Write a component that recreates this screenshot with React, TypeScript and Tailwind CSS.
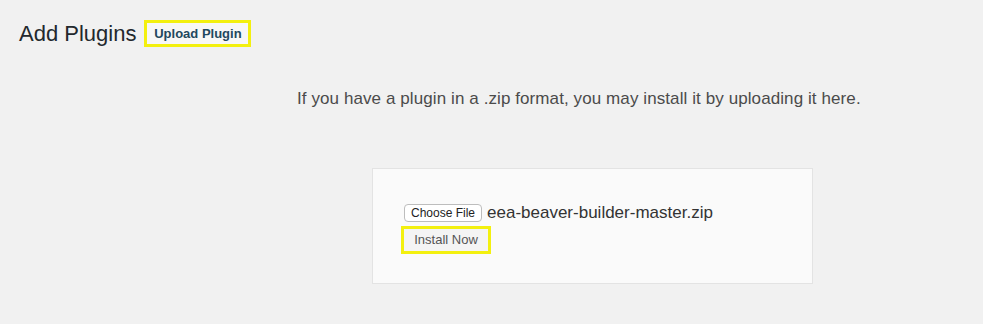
import React from 'react'

const FONT = { fontFamily: '"Liberation Sans", Arial, sans-serif' }

export default function App() {
  return (
    <div className="h-[324px] w-[983px] overflow-hidden bg-[#f1f1f1] text-[#444]" style={FONT}>
      <div className="flex items-center pl-[19px] pt-[20px]">
        <h1 className="text-[22px] leading-[27px] text-[#23282d]">Add Plugins</h1>
        <div className="ml-[8px] flex h-[27px] w-[107px] items-center justify-center border-[3px] border-[#f3f00f] bg-[#f7f7f7] text-[13px] font-bold text-[#22485e]">
          Upload Plugin
        </div>
      </div>

      <p className="mt-[40px] pl-[297px] text-[17px] leading-[24px] tracking-[0.09px] text-[#4b4b4b]">
        If you have a plugin in a .zip format, you may install it by uploading it here.
      </p>

      <div className="ml-[372px] mt-[57px] h-[116px] w-[441px] border border-[#e3e3e3] bg-[#fafafa] pl-[31px] pt-[35px]">
        <div className="flex h-[18px] items-center">
          <button className="h-[18px] rounded-[4px] border border-[#bdbdbd] bg-white px-[6px] text-[12px] leading-[16px] text-[#222]">
            Choose File
          </button>
          <span className="ml-[5px] text-[17px] leading-[18px] text-[#333]">eea-beaver-builder-master.zip</span>
        </div>
        <div className="-ml-[3px] mt-[4px] flex h-[28px] w-[90px] items-center justify-center border-[3px] border-[#f3f00f] bg-[#f4f4f4] text-[13px] text-[#555]">
          Install Now
        </div>
      </div>
    </div>
  )
}
